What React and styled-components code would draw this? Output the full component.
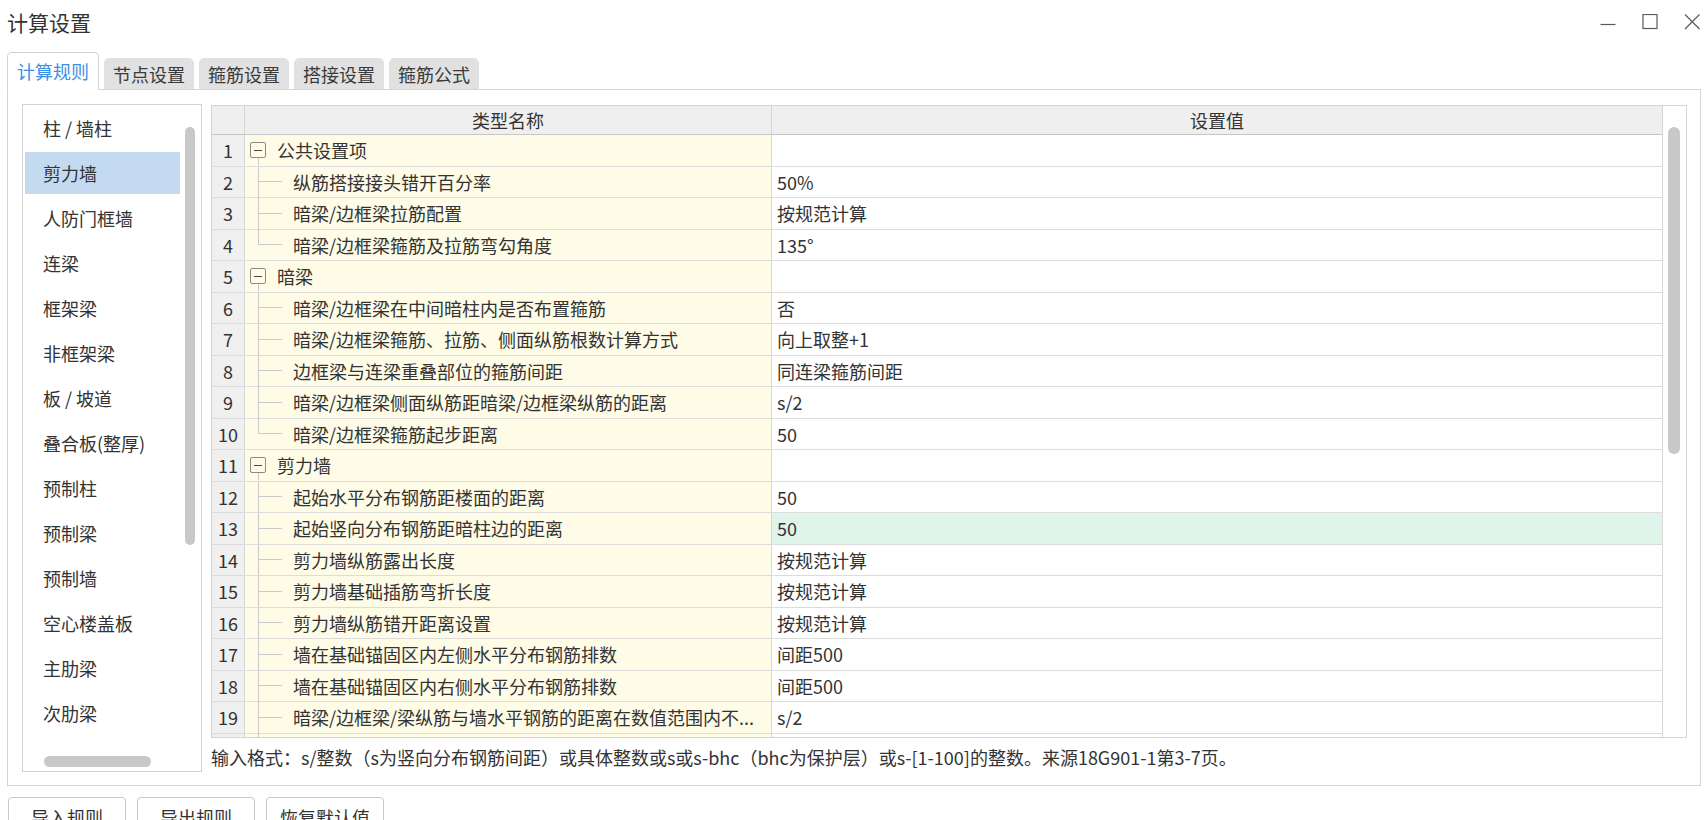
import React from 'react';
import styled, { createGlobalStyle } from 'styled-components';

const GlobalStyle = createGlobalStyle`
  html, body { margin: 0; padding: 0; background: #fff; }
  body {
    font-family: "Noto Sans CJK SC", "Microsoft YaHei", sans-serif;
    color: #333;
    overflow: hidden;
  }
  * { box-sizing: border-box; }
`;

const Window = styled.div`
  width: 1708px;
  height: 820px;
  display: flex;
  flex-direction: column;
  overflow: hidden;
  background: #fff;
`;

const TitleBar = styled.div`
  flex: none;
  height: 44px;
  display: flex;
  align-items: center;
  justify-content: space-between;
  padding: 0 8px 0 7px;
`;

const Title = styled.div`
  font-size: 21px;
  line-height: 28px;
  color: #333;
`;

const Controls = styled.div`
  display: flex;
  align-items: center;
  gap: 26px;
`;

const ControlButton = styled.button`
  border: 0;
  background: none;
  padding: 0;
  width: 16px;
  height: 16px;
  display: flex;
  color: #5a5a5a;
  cursor: pointer;
`;

const TabStrip = styled.div`
  flex: none;
  display: flex;
  align-items: flex-end;
  gap: 5px;
  height: 37px;
  margin-top: 8px;
  padding-left: 7px;
`;

const Tab = styled.div`
  position: relative;
  z-index: ${p => (p.$active ? 1 : 0)};
  height: ${p => (p.$active ? '38px' : '31px')};
  margin-bottom: ${p => (p.$active ? '-1px' : '0')};
  padding: 0 ${p => (p.$active ? '9px' : '8px')};
  display: flex;
  align-items: center;
  justify-content: center;
  font-size: 18px;
  line-height: 24px;
  color: ${p => (p.$active ? '#3b8ee6' : '#3a3a3a')};
  background: ${p => (p.$active ? '#fff' : '#e1e1e1')};
  border: 1px solid ${p => (p.$active ? '#d2d2d2' : '#e1e1e1')};
  border-bottom-color: ${p => (p.$active ? '#fff' : '#e1e1e1')};
  border-radius: 5px 5px 0 0;
`;

const Panel = styled.div`
  flex: none;
  margin: 0 7px;
  height: 697px;
  border: 1px solid #d4d4d4;
  padding: 14px 13px 13px 14px;
  display: grid;
  grid-template-columns: 180px 1fr;
  column-gap: 9px;
`;

const SideList = styled.div`
  border: 1px solid #d4d4d4;
  display: flex;
  flex-direction: column;
  overflow: hidden;
  min-height: 0;
`;

const SideBody = styled.div`
  flex: 1;
  display: flex;
  min-height: 0;
`;

const SideItems = styled.ul`
  list-style: none;
  margin: 0;
  padding: 2px 0 0 2px;
  width: 157px;
  flex: none;
  overflow: hidden;
  display: flex;
  flex-direction: column;
  gap: 3px;
`;

const SideItem = styled.li`
  flex: none;
  height: 42px;
  display: flex;
  align-items: center;
  padding-left: 18px;
  font-size: 18px;
  line-height: 24px;
  color: #333;
  white-space: nowrap;
  background: ${p => (p.$selected ? '#c4daf1' : 'transparent')};
`;

const ScrollTrack = styled.div`
  flex: none;
  width: ${p => p.$width};
  padding: ${p => p.$pad};
  display: flex;
  flex-direction: ${p => (p.$horizontal ? 'row' : 'column')};
`;

const Thumb = styled.div`
  flex: none;
  width: ${p => p.$w};
  height: ${p => p.$h};
  background: #c8c8c8;
  border-radius: 6px;
`;

const RightCol = styled.div`
  display: flex;
  flex-direction: column;
  min-width: 0;
`;

const TableFrame = styled.div`
  margin-top: 1px;
  height: 633px;
  flex: none;
  border: 1px solid #d4d4d4;
  display: flex;
  overflow: hidden;
`;

const Grid = styled.div`
  flex: 1;
  min-width: 0;
  display: flex;
  flex-direction: column;
  overflow: hidden;
`;

const Row = styled.div`
  flex: none;
  display: grid;
  grid-template-columns: 33px 527px 1fr;
  height: ${p => (p.$header ? '29px' : '31.5px')};
`;

const HeadCell = styled.div`
  background: #efefef;
  border-right: 1px solid #d4d4d4;
  border-bottom: 1px solid #c6c6c6;
  display: flex;
  align-items: center;
  justify-content: center;
  font-size: 18px;
  line-height: 24px;
  color: #333;
`;

const NumCell = styled.div`
  background: #f0f0f0;
  border-right: 1px solid #d8d8d8;
  border-bottom: 1px solid #dcdcdc;
  display: flex;
  align-items: center;
  justify-content: center;
  font-size: 18px;
  line-height: 24px;
  color: #333;
`;

const LINE = '#c9c9c9';

const treeBackground = kind => {
  const bg = '#fefbe6';
  if (kind === 'group')
    return `linear-gradient(${LINE}, ${LINE}) 13px 100% / 1px 50% no-repeat, ${bg}`;
  if (kind === 'last')
    return `linear-gradient(${LINE}, ${LINE}) 13px 0 / 1px 50% no-repeat,
      linear-gradient(${LINE}, ${LINE}) 13px 50% / 24px 1px no-repeat, ${bg}`;
  if (kind === 'child')
    return `linear-gradient(${LINE}, ${LINE}) 13px 0 / 1px 100% no-repeat,
      linear-gradient(${LINE}, ${LINE}) 13px 50% / 24px 1px no-repeat, ${bg}`;
  return bg;
};

const NameCell = styled.div`
  background: ${p => treeBackground(p.$kind)};
  border-right: 1px solid #d8d8d8;
  border-bottom: 1px solid #dcdcdc;
  display: flex;
  align-items: center;
  padding-left: ${p => (p.$kind === 'group' ? '5px' : '48px')};
  font-size: 18px;
  line-height: 24px;
  color: #333;
  white-space: nowrap;
  overflow: hidden;
`;

const ExpandBox = styled.span`
  flex: none;
  width: 16px;
  height: 16px;
  margin-right: 11px;
  border: 1px solid #8a8a8a;
  border-radius: 2px;
  background: #fefbe6;
  display: flex;
  align-items: center;
  justify-content: center;
  &::before {
    content: '';
    width: 8px;
    height: 1px;
    background: #444;
  }
`;

const ValueCell = styled.div`
  background: ${p => (p.$active ? '#dff4ea' : '#fff')};
  border-right: 1px solid #d8d8d8;
  border-bottom: 1px solid #dcdcdc;
  display: flex;
  align-items: center;
  padding-left: 5px;
  font-size: 18px;
  line-height: 24px;
  color: #333;
  white-space: nowrap;
  overflow: hidden;
`;

const HelpText = styled.div`
  margin-top: 7px;
  font-size: 18px;
  line-height: 24px;
  color: #333;
  white-space: nowrap;
`;

const ButtonRow = styled.div`
  flex: none;
  display: flex;
  gap: 11px;
  padding-left: 8px;
  margin-top: 11px;
`;

const Button = styled.button`
  width: 118px;
  height: 40px;
  flex: none;
  border: 1px solid #c8c8c8;
  border-radius: 4px;
  background: #fff;
  font-family: inherit;
  font-size: 18px;
  line-height: 24px;
  color: #333;
  padding: 0;
`;

const sideItems = [
  '柱 / 墙柱', '剪力墙', '人防门框墙', '连梁', '框架梁', '非框架梁', '板 / 坡道',
  '叠合板(整厚)', '预制柱', '预制梁', '预制墙', '空心楼盖板', '主肋梁', '次肋梁',
];

const tabs = ['计算规则', '节点设置', '箍筋设置', '搭接设置', '箍筋公式'];

const rows = [
  { kind: 'group', name: '公共设置项', value: '' },
  { kind: 'child', name: '纵筋搭接接头错开百分率', value: '50%' },
  { kind: 'child', name: '暗梁/边框梁拉筋配置', value: '按规范计算' },
  { kind: 'last', name: '暗梁/边框梁箍筋及拉筋弯勾角度', value: '135°' },
  { kind: 'group', name: '暗梁', value: '' },
  { kind: 'child', name: '暗梁/边框梁在中间暗柱内是否布置箍筋', value: '否' },
  { kind: 'child', name: '暗梁/边框梁箍筋、拉筋、侧面纵筋根数计算方式', value: '向上取整+1' },
  { kind: 'child', name: '边框梁与连梁重叠部位的箍筋间距', value: '同连梁箍筋间距' },
  { kind: 'child', name: '暗梁/边框梁侧面纵筋距暗梁/边框梁纵筋的距离', value: 's/2' },
  { kind: 'last', name: '暗梁/边框梁箍筋起步距离', value: '50' },
  { kind: 'group', name: '剪力墙', value: '' },
  { kind: 'child', name: '起始水平分布钢筋距楼面的距离', value: '50' },
  { kind: 'child', name: '起始竖向分布钢筋距暗柱边的距离', value: '50', active: true },
  { kind: 'child', name: '剪力墙纵筋露出长度', value: '按规范计算' },
  { kind: 'child', name: '剪力墙基础插筋弯折长度', value: '按规范计算' },
  { kind: 'child', name: '剪力墙纵筋错开距离设置', value: '按规范计算' },
  { kind: 'child', name: '墙在基础锚固区内左侧水平分布钢筋排数', value: '间距500' },
  { kind: 'child', name: '墙在基础锚固区内右侧水平分布钢筋排数', value: '间距500' },
  { kind: 'child', name: '暗梁/边框梁/梁纵筋与墙水平钢筋的距离在数值范围内不...', value: 's/2' },
  { kind: 'child', name: '', value: '', hiddenNum: true },
];

const MinimizeIcon = () => (
  <svg width="16" height="16" viewBox="0 0 16 16">
    <line x1="0.5" y1="10.5" x2="15.5" y2="10.5" stroke="currentColor" strokeWidth="1.2" />
  </svg>
);
const MaximizeIcon = () => (
  <svg width="16" height="16" viewBox="0 0 16 16">
    <rect x="1" y="0.5" width="14" height="14" fill="none" stroke="currentColor" strokeWidth="1.2" />
  </svg>
);
const CloseIcon = () => (
  <svg width="16" height="16" viewBox="0 0 16 16">
    <path d="M1 0.5 L15.5 15 M15.5 0.5 L1 15" fill="none" stroke="currentColor" strokeWidth="1.2" />
  </svg>
);

export default function App() {
  return (
    <Window>
      <GlobalStyle />
      <TitleBar>
        <Title>计算设置</Title>
        <Controls>
          <ControlButton aria-label="最小化"><MinimizeIcon /></ControlButton>
          <ControlButton aria-label="最大化"><MaximizeIcon /></ControlButton>
          <ControlButton aria-label="关闭"><CloseIcon /></ControlButton>
        </Controls>
      </TitleBar>

      <TabStrip>
        {tabs.map((t, i) => (
          <Tab key={t} $active={i === 0}>{t}</Tab>
        ))}
      </TabStrip>

      <Panel>
        <SideList>
          <SideBody>
            <SideItems>
              {sideItems.map((s, i) => (
                <SideItem key={s} $selected={i === 1}>{s}</SideItem>
              ))}
            </SideItems>
            <ScrollTrack $width="21px" $pad="22px 0 0 5px">
              <Thumb $w="10px" $h="418px" />
            </ScrollTrack>
          </SideBody>
          <ScrollTrack $horizontal $width="100%" $pad="5px 0 4px 21px">
            <Thumb $w="107px" $h="11px" />
          </ScrollTrack>
        </SideList>

        <RightCol>
          <TableFrame>
            <Grid>
              <Row $header>
                <HeadCell />
                <HeadCell>类型名称</HeadCell>
                <HeadCell>设置值</HeadCell>
              </Row>
              {rows.map((r, i) => (
                <Row key={i}>
                  <NumCell>{r.hiddenNum ? '' : i + 1}</NumCell>
                  <NameCell $kind={r.kind}>
                    {r.kind === 'group' && <ExpandBox />}
                    {r.name}
                  </NameCell>
                  <ValueCell $active={r.active}>{r.value}</ValueCell>
                </Row>
              ))}
            </Grid>
            <ScrollTrack $width="23px" $pad="21px 0 0 5px">
              <Thumb $w="12px" $h="327px" />
            </ScrollTrack>
          </TableFrame>
          <HelpText>
            输入格式：s/整数（s为竖向分布钢筋间距）或具体整数或s或s-bhc（bhc为保护层）或s-[1-100]的整数。来源18G901-1第3-7页。
          </HelpText>
        </RightCol>
      </Panel>

      <ButtonRow>
        <Button>导入规则</Button>
        <Button>导出规则</Button>
        <Button>恢复默认值</Button>
      </ButtonRow>
    </Window>
  );
}
